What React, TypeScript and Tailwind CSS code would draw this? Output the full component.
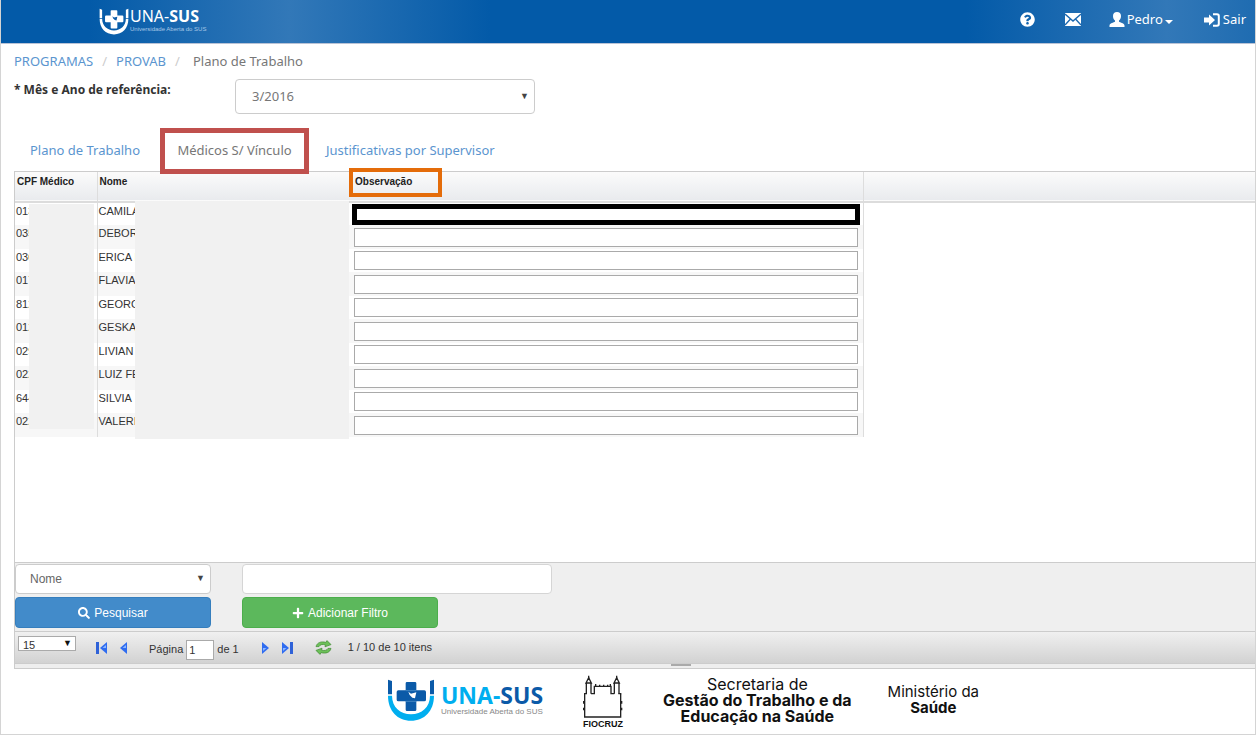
import { useState } from 'react';
import { FaPlus, FaQuestionCircle, FaSearch } from 'react-icons/fa';

type Doctor = { cpf: string; name: string };

const DOCTORS: Doctor[] = [
  { cpf: '013', name: 'CAMILA' },
  { cpf: '035', name: 'DEBORA' },
  { cpf: '030', name: 'ERICA P' },
  { cpf: '017', name: 'FLAVIA' },
  { cpf: '812', name: 'GEORG' },
  { cpf: '012', name: 'GESKA' },
  { cpf: '029', name: 'LIVIAN' },
  { cpf: '022', name: 'LUIZ FE' },
  { cpf: '644', name: 'SILVIA' },
  { cpf: '022', name: 'VALERI' },
];

function UnaSusMark({ cup, body, className }: { cup: string; body: string; className: string }) {
  return (
    <svg viewBox="0 0 144 126" className={className} aria-hidden="true">
      <path d="M3 2L15 6V46H3Z M141 2L129 6V46H141Z" fill={body} />
      <path d="M3 50H15C15 84 40 106 72 106S129 84 129 50H141C141 96 112 125 72 125S3 96 3 50Z" fill={cup} />
      <path
        d="M60 9H84Q88 9 88 13V34H112Q117 34 117 39V62Q117 67 112 67H88V92Q88 96 84 96H60Q56 96 56 92V67H34Q29 67 29 62V39Q29 34 34 34H56V13Q56 9 60 9Z"
        fill={body}
      />
      {cup !== body && <path d="M56 35H88M56 67H88" stroke="#5d9bd0" strokeWidth="2" />}
      <path d="M64 38L72 44L88 40L84 58L76 56L68 48Z" fill={cup === body ? '#0d5ca8' : '#fff'} />
    </svg>
  );
}

function EnvelopeIcon() {
  return (
    <svg viewBox="0 0 16 13" className="h-[13px] w-4" aria-hidden="true">
      <path d="M0 0H16V13H0Z" fill="#fff" />
      <path d="M0 1L8 8L16 1M0 12L5.5 6M16 12L10.5 6" fill="none" stroke="#1d69b0" strokeWidth="1.4" />
    </svg>
  );
}

function UserIcon() {
  return (
    <svg viewBox="0 0 16 15" className="h-[15px] w-4" aria-hidden="true">
      <path
        d="M8 0C10.5 0 12 1.6 12 4C12 6 11.2 7.6 10 8.6V9.8C11 10.6 15.5 11.4 15.5 13.4V15H.5V13.4C.5 11.4 5 10.6 6 9.8V8.6C4.8 7.6 4 6 4 4C4 1.6 5.5 0 8 0Z"
        fill="#fff"
      />
    </svg>
  );
}

function SignInIcon() {
  return (
    <svg viewBox="0 0 16 14" className="h-[14px] w-4" aria-hidden="true">
      <path d="M0 4.5H5V1.5L11 7L5 12.5V9.5H0Z" fill="#fff" />
      <path d="M9 1.2H13Q14.8 1.2 14.8 3V11Q14.8 12.8 13 12.8H9" fill="none" stroke="#fff" strokeWidth="2" />
    </svg>
  );
}

function CastleLogo() {
  return (
    <svg viewBox="0 0 120 132" className="h-11 w-10" aria-hidden="true">
      <g fill="none" stroke="#222" strokeWidth="4">
        <path d="M3 126H115M5 124V56M113 124V56M10 56V24M24 56V24M94 56V24M108 56V24" />
        <path d="M3 56H12M24 56H34V34M84 34V56H94M106 56H115M32 34H86" />
        <path d="M9 24L17 8L25 24ZM93 24L101 8L109 24Z" />
        <path d="M17 10V2M101 10V2M38 34V27M50 34V29M62 34V29M74 34V29M82 34V27" />
        <path d="M2 78V86M2 98V106M116 78V86M116 98V106" />
      </g>
    </svg>
  );
}

function PagerArrow({ label, back, bar }: { label: string; back?: boolean; bar?: boolean }) {
  return (
    <button type="button" aria-label={label} className={back ? '' : 'rotate-180'}>
      <svg viewBox="0 0 12 12" className="h-3 w-3" aria-hidden="true">
        {bar && <path d="M0 0H3V12H0Z" fill="#2f62d8" />}
        <path d="M11 0V12L4 6Z" fill="#2f6cf0" />
        <path d="M10 3V6H6.5Z" fill="#8db8ff" />
      </svg>
    </button>
  );
}

function RefreshIcon() {
  return (
    <svg viewBox="0 0 17 15" className="h-[15px] w-[17px]" aria-hidden="true">
      <g fill="#6cc058" stroke="#3d8a30" strokeWidth=".7" strokeLinejoin="round">
        <path d="M1 6.6C2 2.6 6 1 11 2.4L12 .6L16 4.6L10 6.8L10.4 4.8C7.4 4 5 4.6 4 6.6Z" />
        <path d="M16 8.4C15 12.4 11 14 6 12.6L5 14.4L1 10.4L7 8.2L6.6 10.2C9.6 11 12 10.4 13 8.4Z" />
      </g>
    </svg>
  );
}

export default function App() {
  const [page, setPage] = useState('1');

  return (
    <div className="overflow-hidden border-x border-b border-[#d4d4d4] bg-white font-['Noto_Sans',sans-serif] text-[13px] text-[#777]">
      <header className="flex h-11 items-center justify-between border-b border-[#b9c3d6] bg-[linear-gradient(to_right,#035aa8_7%,#3278b8_23%,#035aa8_39%,#035aa8_77%,#3278b8_93%,#1f6cb1_100%)] pr-[9px] pb-1 pl-[98px] text-white">
        <a href="#inicio" className="flex items-center gap-px" aria-label="UNA-SUS">
          <UnaSusMark cup="#fff" body="#fff" className="mt-1 h-[27px] w-[30px]" />
          <span className="flex flex-col">
            <span className="text-[16px] leading-[18px]">
              UNA-<b>SUS</b>
            </span>
            <span className="font-['Liberation_Sans',sans-serif] text-[6px] leading-2 text-[#a9c8e6]">
              Universidade Aberta do SUS
            </span>
          </span>
        </a>
        <nav className="flex items-center">
          <a href="#ajuda" aria-label="Ajuda" className="mr-[30px]">
            <FaQuestionCircle size={15} />
          </a>
          <a href="#mensagens" aria-label="Mensagens" className="mr-7">
            <EnvelopeIcon />
          </a>
          <button type="button" className="mr-[31px] flex items-center gap-0.5">
            <UserIcon />
            Pedro
            <svg viewBox="0 0 8 4" className="mt-1 h-1 w-2" aria-hidden="true">
              <path d="M0 0H8L4 4Z" fill="#fff" />
            </svg>
          </button>
          <a href="#sair" className="flex items-center gap-[3px]">
            <SignInIcon />
            Sair
          </a>
        </nav>
      </header>

      <main className="pl-[13px]">
        <nav className="flex gap-[9px] pt-[7px] leading-5">
          <a href="#programas" className="text-[#5b95cf]">PROGRAMAS</a>
          <span className="text-[#ccc]">/</span>
          <a href="#provab" className="text-[#5b95cf]">PROVAB</a>
          <span className="text-[#ccc]">/</span>
          <span className="ml-1">Plano de Trabalho</span>
        </nav>

        <div className="flex pt-2">
          <label htmlFor="ref" className="w-[221px] text-[12px] leading-[22px] font-bold text-[#333]">
            * Mês e Ano de referência:
          </label>
          <div className="relative w-[300px]">
            <select id="ref" className="h-[35px] w-full appearance-none rounded border border-[#ccc] bg-white px-4">
              <option>3/2016</option>
            </select>
            <span className="pointer-events-none absolute top-2.5 right-1.5 text-[9px] text-[#444]">▼</span>
          </div>
        </div>

        <div className="relative z-10 -mb-[3px] flex items-center pt-[14px]">
          <button type="button" className="w-[146px] pl-4 text-left text-[#5b95cf]">Plano de Trabalho</button>
          <button type="button" className="h-[46px] w-[149px] border-5 border-[#c0504d]">Médicos S/ Vínculo</button>
          <button type="button" className="ml-[17px] text-[#5b95cf]">Justificativas por Supervisor</button>
        </div>

        <section className="border-l border-[#ccc] font-['Liberation_Sans',sans-serif] text-[11px] text-[#333]">
          <div className="h-[392px] border-t border-b border-[#ccc]">
            <div className="relative">
              <table className="w-full table-fixed border-collapse">
                <colgroup>
                  <col className="w-[82px]" />
                  <col className="w-[254px]" />
                  <col className="w-[512px]" />
                  <col />
                </colgroup>
                <thead>
                  <tr className="h-[30px] border-b-2 border-[#dcdcdc] bg-linear-to-b from-[#fbfbfb] to-[#e9ebee] text-left align-top text-[10px] text-[#222]">
                    <th className="border-r border-[#ddd] pt-0.5 pl-0.5">CPF Médico</th>
                    <th className="pt-0.5 pl-0.5">Nome</th>
                    <th className="relative border-r border-[#ddd] pt-0.5 pl-1">
                      Observação
                      <span className="absolute -top-1 -left-0.5 h-[29px] w-[93px] border-4 border-[#e46c0a]" />
                    </th>
                    <th />
                  </tr>
                </thead>
                <tbody>
                  {DOCTORS.map((d, i) => (
                    <tr key={i} className={i % 2 ? 'h-6' : 'h-[23px]'}>
                      <td className={`border-r border-[#ddd] pl-px align-top ${i % 2 ? 'bg-[#f7f7f7]' : ''}`}>{d.cpf}</td>
                      <td className={`pl-px align-top ${i % 2 ? 'bg-[#f7f7f7]' : ''}`}>{d.name}</td>
                      <td className={`border-r border-[#ddd] pr-[5px] pl-[3px] ${i % 2 ? 'bg-[#f7f7f7]' : ''}`}>
                        <input
                          aria-label={`Observação ${d.name}`}
                          className={`block w-full bg-white px-1 ${
                            i === 0
                              ? 'h-[17px] border-3 border-black outline-2 outline-black'
                              : 'h-[19px] border border-[#aaa]'
                          }`}
                        />
                      </td>
                      <td />
                    </tr>
                  ))}
                </tbody>
              </table>
              <div className="absolute top-8 bottom-2 left-[14px] w-[65px] bg-[#f1f1f1]" />
              <div className="absolute top-[29px] -bottom-0.5 left-[120px] w-[214px] bg-[#f1f1f1]" />
            </div>
          </div>

          <form className="bg-[#efefef] pt-px pb-[3px] text-[12px]" onSubmit={(e) => e.preventDefault()}>
            <div className="flex gap-[31px]">
              <div className="relative w-[196px]">
                <select aria-label="Campo" className="h-[30px] w-full appearance-none rounded border border-[#ccc] bg-white px-[14px] text-[#666]">
                  <option>Nome</option>
                </select>
                <span className="pointer-events-none absolute top-2 right-1.5 text-[9px] text-[#444]">▼</span>
              </div>
              <input aria-label="Valor" className="h-[30px] w-[310px] rounded border border-[#d5d5d5] bg-white px-3" />
            </div>
            <div className="mt-[3px] flex gap-[31px] text-white">
              <button type="submit" className="flex h-[31px] w-[196px] items-center justify-center gap-1 rounded-sm border border-[#357ebd] bg-[#428bca]">
                <FaSearch size={12} />
                Pesquisar
              </button>
              <button type="button" className="flex h-[31px] w-[196px] items-center justify-center gap-1 rounded-sm border border-[#4cae4c] bg-[#5cb85c]">
                <FaPlus size={12} />
                Adicionar Filtro
              </button>
            </div>
          </form>

          <div className="flex h-[33px] items-center border-t border-b border-[#ccc] bg-linear-to-b from-[#f0f0f0] to-[#d2d2d2] pl-[3px]">
            <div className="relative mb-2 w-[58px]">
              <select aria-label="Itens por página" className="block h-[15px] w-full appearance-none border border-[#aaa] bg-white pl-1">
                <option>15</option>
              </select>
              <span className="pointer-events-none absolute top-0 right-1 text-[9px] leading-[14px] text-[#111]">▼</span>
            </div>
            <div className="ml-5 flex gap-2">
              <PagerArrow label="Primeira página" back bar />
              <PagerArrow label="Página anterior" back />
            </div>
            <label className="ml-[21px] flex items-center gap-[3px] pt-1">
              Página
              <input
                value={page}
                onChange={(e) => setPage(e.target.value)}
                className="h-5 w-7 border border-[#aaa] bg-white px-0.5"
              />
              de 1
            </label>
            <div className="ml-[22px] flex gap-2">
              <PagerArrow label="Próxima página" />
              <PagerArrow label="Última página" bar />
            </div>
            <button type="button" aria-label="Atualizar" className="ml-[22px]">
              <RefreshIcon />
            </button>
            <span className="ml-4">1 / 10 de 10 itens</span>
          </div>
          <div className="flex h-[5px] justify-center border-b border-[#ccc] bg-[#eee] pl-[92px]">
            <span className="h-0.5 w-5 bg-[#aaa]" />
          </div>
        </section>
      </main>

      <footer className="flex h-[65px] items-center justify-center pb-1 pl-[110px] font-['Inter',sans-serif] text-[16px] leading-4 text-[#111]">
        <div className="flex items-center gap-1.5">
          <UnaSusMark cup="#00aeef" body="#0b5aa8" className="h-[42px] w-12" />
          <div className="font-['Noto_Sans',sans-serif]">
            <div className="text-[23px] leading-6 font-bold text-[#00aeef]">
              UNA-<span className="text-[#0b5aa8]">SUS</span>
            </div>
            <div className="font-['Liberation_Sans',sans-serif] text-[8px] leading-[9px] text-[#888]">
              Universidade Aberta do SUS
            </div>
          </div>
        </div>
        <div className="ml-10 flex flex-col items-center pt-1">
          <CastleLogo />
          <span className="font-['Liberation_Sans',sans-serif] text-[9px] leading-[10px] font-bold">FIOCRUZ</span>
        </div>
        <p className="ml-10 text-center">
          Secretaria de
          <br />
          <b>
            Gestão do Trabalho e da
            <br />
            Educação na Saúde
          </b>
        </p>
        <p className="ml-9 text-center text-[15px]">
          Ministério da
          <br />
          <b>Saúde</b>
        </p>
      </footer>
    </div>
  );
}
